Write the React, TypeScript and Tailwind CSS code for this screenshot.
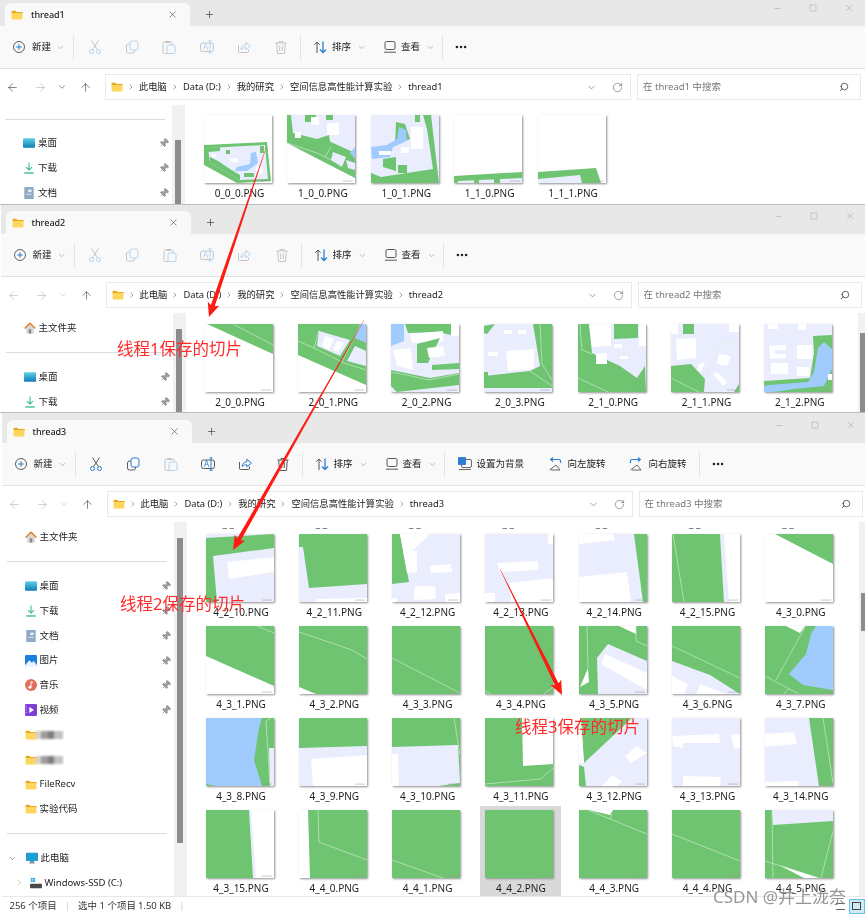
import { ArrowLeft, ArrowRight, ArrowUp, ChevronDown, ChevronRight, Ellipsis, Minus, Pin, Plus, RotateCw, Search, Square, X } from "lucide-react";
import type { ReactNode } from "react";

const G = "#6fc472";
const L = "#e9edfd";
const W = "#9fcbfd";
const A = "#ffffff";

type Thumb = { n: string; bg: string; p?: [string, string][]; l?: string[] };

const thread1: Thumb[] = [
  {
    n: "0_0_0.PNG", bg: A,
    p: [
      [G, "0,30 63,27 67,66 33,68 0,50"],
      [L, "4,33 61,30 64,64 36,65 6,48"],
      [W, "47,38 52,37 54,48 43,56 31,56 33,52 46,49"],
      [G, "4,33 16,32 16,36 4,37"],
      [G, "6,42 14,46 26,54 36,60 36,65 6,48"],
      [G, "56,31 60,31 60,38 56,38"],
      [G, "40,58 50,58 50,62 40,62"],
      [G, "22,35 26,35 26,39 22,39"],
      [A, "8,39 12,39 12,42 8,42"],
      [A, "52,52 58,51 59,58 53,59"],
      [A, "26,44 34,43 34,47 26,47"],
    ],
  },
  {
    n: "1_0_0.PNG", bg: A,
    p: [
      [L, "0,0 68,0 68,63 0,28"],
      [G, "0,0 4,0 6,18 30,24 44,27 68,38 68,63 0,28"],
      [G, "18,0 29,0 29,7 18,7"],
      [G, "39,0 46,0 46,5 39,5"],
      [G, "30,24 42,20 44,32 34,30"],
      [W, "63,38 68,32 68,44"],
      [L, "46,37 59,42 55,52 44,45"],
      [L, "59,45 68,48 68,55 61,53"],
      [A, "8,17 14,17 14,23 8,23"],
      [A, "40,8 52,8 52,20 40,20"],
      [A, "24,2 32,2 32,10 24,10"],
    ],
    l: ["0,28 30,38 46,46", "44,32 38,42"],
  },
  {
    n: "1_0_1.PNG", bg: L,
    p: [
      [G, "52,0 60,0 68,68 0,68 0,58 10,62 62,54 56,14"],
      [G, "25,7 34,9 39,24 24,30"],
      [W, "28,12 35,15 36,26 22,32 19,42 1,44 0,32 16,30 26,24"],
      [G, "12,44 25,42 25,56 12,52"],
      [G, "27,50 36,50 36,58 27,58"],
      [G, "44,0 49,0 49,7 44,7"],
      [A, "40,12 52,12 52,34 40,34"],
      [A, "8,36 20,36 20,40 8,40"],
      [A, "30,32 38,32 38,38 30,38"],
    ],
  },
  {
    n: "1_1_0.PNG", bg: A,
    p: [
      [G, "0,61 68,57 68,64 0,68"],
      [L, "4,66 68,63 68,68 4,68"],
      [G, "20,63 25,63 25,68 20,68"],
      [G, "40,62 46,62 46,68 40,68"],
    ],
  },
  {
    n: "1_1_1.PNG", bg: A,
    p: [
      [G, "0,57 58,53 63,68 0,68"],
      [L, "0,64 42,60 44,68 0,68"],
      [G, "45,61 51,61 51,68 45,68"],
    ],
  },
];

const thread2: Thumb[] = [
  { n: "2_0_0.PNG", bg: A, p: [[G, "2,0 68,0 68,30"]], l: ["28,0 68,21"] },
  {
    n: "2_0_1.PNG", bg: A,
    p: [
      [G, "0,0 68,0 68,61 0,31"],
      [L, "21,7 52,16 42,32 19,22"],
      [W, "62,0 68,0 68,19 57,14"],
      [L, "57,22 68,27 68,42 49,37"],
      [A, "27,12 36,15 31,26 24,22"],
      [A, "39,17 46,19 40,28 35,26"],
    ],
    l: ["0,17 16,24 46,39 68,46", "16,24 21,6", "44,38 62,2"],
  },
  {
    n: "2_0_2.PNG", bg: L,
    p: [
      [W, "0,0 13,0 13,17 0,22"],
      [G, "14,0 60,0 60,11 47,8 17,9"],
      [A, "60,0 68,0 68,12 60,12"],
      [A, "19,10 52,7 52,17 21,19"],
      [G, "26,20 49,14 37,39 26,39"],
      [G, "41,41 68,39 68,45 41,46"],
      [A, "2,26 20,24 22,46 6,42"],
      [A, "36,24 52,22 54,32 38,34"],
      [G, "0,46 39,54 68,49 68,61 6,68 0,62"],
    ],
    l: ["0,48 20,52 38,56 68,50"],
  },
  {
    n: "2_0_3.PNG", bg: L,
    p: [
      [G, "49,0 68,0 68,64 0,64 0,52 46,47 56,42"],
      [G, "0,2 11,0 3,10 0,9"],
      [G, "0,48 4,48 4,52 0,52"],
      [A, "22,27 50,25 50,45 24,47"],
      [A, "20,6 28,6 28,10 20,10"],
      [A, "34,6 42,6 42,10 34,10"],
      [A, "4,28 14,28 14,32 4,32"],
    ],
    l: ["56,0 58,40 68,56", "46,47 68,62"],
  },
  {
    n: "2_1_0.PNG", bg: L,
    p: [
      [G, "0,0 11,0 14,29 42,42 59,54 67,42 68,68 0,68"],
      [G, "36,0 60,0 60,14 36,15"],
      [A, "11,0 33,0 33,22 14,23"],
      [A, "18,30 29,29 29,40 18,40"],
      [A, "61,0 68,0 68,22 61,22"],
      [A, "42,32 50,32 50,35 42,35"],
      [A, "36,20 44,20 44,24 36,24"],
    ],
    l: ["2,0 4,26 14,30", "0,54 30,68"],
  },
  {
    n: "2_1_1.PNG", bg: L,
    p: [
      [G, "12,0 23,0 23,10 12,10"],
      [G, "0,42 20,40 34,55 33,68 0,68"],
      [G, "63,68 68,60 68,68"],
      [A, "5,15 25,14 25,34 6,36"],
      [A, "0,0 7,0 7,10 0,10"],
      [A, "48,30 60,32 56,42 46,40"],
      [A, "28,40 34,38 30,48 26,46"],
      [A, "42,50 46,48 56,58 52,62"],
      [A, "58,0 68,0 68,8 58,8"],
    ],
    l: ["34,55 50,20 68,16", "0,54 28,68"],
  },
  {
    n: "2_1_2.PNG", bg: L,
    p: [
      [G, "0,57 46,54 50,29 49,12 68,11 68,68 0,68"],
      [W, "54,24 60,18 68,25 68,45 60,62 30,65 10,68 0,68 0,62 5,61 44,58 50,48"],
      [A, "5,22 22,21 22,34 6,35"],
      [A, "33,21 48,21 48,35 33,35"],
      [A, "7,39 24,39 24,50 7,50"],
      [A, "33,43 46,43 46,52 33,52"],
      [L, "11,26 22,26 22,30 11,30"],
      [A, "34,0 42,0 42,6 34,6"],
      [A, "4,0 14,0 14,5 4,5"],
      [A, "64,50 68,50 68,56 64,56"],
    ],
  },
];

const thread3: Thumb[] = [
  { n: "4_2_10.PNG", bg: G, p: [[L, "0,0 68,0 0,4"], [L, "7,22 68,14 68,68 11,68"], [A, "21,28 68,23 68,38 23,45"]] },
  { n: "4_2_11.PNG", bg: L, p: [[G, "0,0 68,0 68,50 10,54 4,13 0,13"], [A, "17,65 68,64 68,68 17,68"]] },
  {
    n: "4_2_12.PNG", bg: L,
    p: [
      [G, "0,0 8,0 17,48 0,50"],
      [A, "8,0 38,0 20,17 25,17 25,38 15,39"],
      [A, "38,32 59,30 60,38 39,39"],
      [A, "23,52 43,52 44,65 22,66"],
      [A, "53,60 68,59 68,68 53,68"],
      [A, "0,64 5,64 5,68 0,68"],
    ],
  },
  {
    n: "4_2_13.PNG", bg: L,
    p: [
      [A, "12,29 53,27 53,36 15,38"],
      [A, "25,49 68,44 68,68 26,68"],
      [A, "0,59 10,59 10,68 0,68"],
      [A, "63,0 68,0 68,10 63,10"],
    ],
  },
  { n: "4_2_14.PNG", bg: L, p: [[G, "55,0 68,0 68,68 64,68"], [A, "0,0 34,0 36,6 0,10"], [A, "0,43 48,38 52,68 0,68"]] },
  { n: "4_2_15.PNG", bg: A, p: [[L, "48,0 52,0 57,68 52,68"], [G, "0,0 48,0 52,68 0,68"]], l: ["1,0 12,68"] },
  { n: "4_3_0.PNG", bg: A, p: [[G, "10,0 68,0 68,30"]] },
  { n: "4_3_1.PNG", bg: G, p: [[A, "0,30 68,60 68,68 0,68"]], l: ["51,0 68,7"] },
  { n: "4_3_2.PNG", bg: G, p: [[A, "0,61 17,68 0,68"]], l: ["0,6 53,24 68,33"] },
  { n: "4_3_3.PNG", bg: G, l: ["0,32 68,67"] },
  { n: "4_3_4.PNG", bg: G, l: ["0,65 6,68", "59,68 68,61"] },
  {
    n: "4_3_5.PNG", bg: G,
    p: [
      [L, "18,32 29,18 68,35 68,68 19,68"],
      [A, "26,28 68,47 68,64 22,38"],
      [A, "40,0 57,0 57,8"],
      [A, "1,61 9,42 10,56"],
    ],
    l: ["8,0 9,42", "57,0 57,15 68,20"],
  },
  {
    n: "4_3_6.PNG", bg: G,
    p: [[L, "0,35 38,49 68,68 0,68"], [A, "0,50 16,58 12,68 0,68"], [A, "28,58 54,68 25,68"]],
    l: ["0,20 68,52"],
  },
  {
    n: "4_3_7.PNG", bg: G,
    p: [[W, "51,0 68,0 68,64 38,59 24,48 41,28 46,8"], [A, "21,0 40,0 35,7"]],
    l: ["40,1 11,54", "0,50 34,68", "23,63 19,68"],
  },
  {
    n: "4_3_8.PNG", bg: W,
    p: [[G, "56,0 68,0 68,68 56,68 48,42 53,10"], [L, "63,30 68,30 68,68 64,68"], [G, "0,66 10,68 0,68"]],
    l: ["65,0 60,3 64,68"],
  },
  { n: "4_3_9.PNG", bg: G, p: [[L, "0,30 68,28 68,68 0,68"], [A, "12,41 68,37 68,68 14,68"]] },
  {
    n: "4_3_10.PNG", bg: G,
    p: [[L, "0,29 66,27 68,65 46,68 0,68"], [A, "0,36 6,36 7,68 0,68"]],
    l: ["62,0 68,37"],
  },
  { n: "4_3_11.PNG", bg: G, p: [[A, "37,0 68,0 68,46 38,48"]], l: ["0,66 44,62 56,61 68,50"] },
  {
    n: "4_3_12.PNG", bg: L,
    p: [
      [G, "2,0 53,0 5,45"],
      [A, "0,0 2,0 5,45 0,45"],
      [G, "0,47 5,49 7,68 0,68"],
      [A, "58,28 68,35 52,45 46,38"],
      [A, "33,57 43,63 38,68 23,68"],
    ],
  },
  {
    n: "4_3_13.PNG", bg: L,
    p: [
      [A, "0,18 47,16 48,25 11,25 11,30 1,28"],
      [A, "59,17 68,16 68,30 62,31"],
      [A, "11,58 49,59 48,68 11,68"],
    ],
  },
  {
    n: "4_3_14.PNG", bg: L,
    p: [
      [G, "44,0 68,0 68,68 54,68"],
      [A, "0,16 29,14 32,26 0,29"],
      [A, "0,64 33,63 34,68 0,68"],
    ],
    l: ["58,0 68,65"],
  },
  { n: "4_3_15.PNG", bg: A, p: [[L, "43,0 45,0 50,68 47,68"], [G, "0,0 43,0 47,68 0,68"]] },
  { n: "4_4_0.PNG", bg: G, p: [[A, "0,0 9,0 11,68 0,68"]], l: ["19,0 20,32 68,50"] },
  { n: "4_4_1.PNG", bg: G, l: ["0,50 51,68"] },
  { n: "4_4_2.PNG", bg: G },
  { n: "4_4_3.PNG", bg: G, p: [[A, "10,0 34,0 31,5"]], l: ["9,0 68,24", "31,9 33,4"] },
  { n: "4_4_4.PNG", bg: G, l: ["0,24 68,51"] },
  {
    n: "4_4_5.PNG", bg: G,
    p: [[L, "7,0 68,0 68,11 8,15"], [A, "14,55 54,68 39,68"]],
    l: ["0,51 54,68", "7,0 8,68", "68,21 56,68"],
  },
];

const Tile = ({ t, selected }: { t: Thumb; selected?: boolean }) => (
  <div className={`w-[81px] h-[91px] pt-1 ${selected ? "bg-[#d9d9d9]" : ""}`}>
    <svg viewBox="0 0 68 68" className="w-[68px] h-[68px] ml-[5px] shadow-[1px_1px_2px_#8f8f8f]">
      <rect width="68" height="68" fill={t.bg} />
      {t.p?.map(([c, pts], i) => <polygon key={i} points={pts} fill={c} />)}
      {t.l?.map((pts, i) => <polyline key={i} points={pts} fill="none" stroke="#dcefdc" strokeWidth="0.6" />)}
      <rect x="56" y="65.5" width="10" height="1.2" fill="#999" opacity="0.45" />
    </svg>
    <div className="mt-[3px] text-center text-[10px] leading-[14px] text-[#1c1c1c] whitespace-nowrap">{t.n}</div>
  </div>
);

const FolderIcon = ({ className = "w-3 h-[10px]" }: { className?: string }) => (
  <svg viewBox="0 0 14 12" className={`shrink-0 ${className}`}>
    <path d="M0.5 2a1 1 0 0 1 1-1h3.5l1.3 1.3h6.7a1 1 0 0 1 1 1v1h-13.5z" fill="#e8a820" />
    <rect x="0.5" y="3.5" width="13" height="8" rx="1" fill="#ffd65c" />
  </svg>
);

const Ic = ({ children }: { children: ReactNode }) => (
  <svg viewBox="0 0 14 14" fill="none" strokeWidth="1" className="w-[14px] h-[14px]">{children}</svg>
);

const cmdIcons = (on: boolean) => {
  const b = on ? "#2a7fd0" : "#b5d3ee";
  const g = on ? "#5a5a5a" : "#c4c4c4";
  return [
    <Ic key="cut">
      <circle cx="3.5" cy="11.5" r="2" stroke={b} />
      <circle cx="10.5" cy="11.5" r="2" stroke={b} />
      <path d="M4.5 9.8 10.5 .5M9.5 9.8 3.5 .5" stroke={g} />
    </Ic>,
    <Ic key="copy">
      <rect x="1.5" y="4" width="8" height="9" rx="2" stroke={g} />
      <rect x="5" y="1" width="8" height="9" rx="2" stroke={b} fill="#f9f9f9" />
    </Ic>,
    <Ic key="paste">
      <rect x="1" y="2" width="9" height="11.5" rx="1.5" stroke="#c4c4c4" />
      <rect x="3.5" y="1" width="4" height="2" fill="#c4c4c4" />
      <rect x="5" y="5" width="8" height="8.5" rx="1.5" stroke="#b5d3ee" fill="#f9f9f9" />
    </Ic>,
    <Ic key="rename">
      <rect x=".5" y="3" width="13" height="8.5" rx="2" stroke={g} />
      <text x="3" y="10" fontSize="8" fill={b}>A</text>
      <path d="M10 1v12M8.5 .8h3M8.5 13.2h3" stroke={b} />
    </Ic>,
    <Ic key="share">
      <path d="M1.5 5v6.5a1 1 0 0 0 1 1h8a1 1 0 0 0 1-1V9.5" stroke={g} />
      <path d="M4 9.5C4.5 6 7 4.8 8.8 4.8V2.2L13.5 6l-4.7 3.8V7.6C7 7.6 5.5 8.2 4 9.5Z" stroke={b} fill={on ? "#f9f9f9" : "none"} />
    </Ic>,
    <Ic key="trash">
      <path d="M1.5 3h11M5 3V1.5h4V3M2.7 3l.8 10.5h7l.8-10.5M5.7 5.5v5.5M8.3 5.5v5.5" stroke={g} />
    </Ic>,
  ];
};

const SortIcon = () => (
  <Ic>
    <path d="M4 13V2M1.3 4.7 4 2l2.7 2.7" stroke="#555" />
    <path d="M10 1.5v11M7 9.5l3 3 3-3" stroke="#2a7fd0" strokeWidth="1.3" />
  </Ic>
);

const ViewIcon = () => (
  <Ic>
    <rect x="2" y="1.5" width="10" height="8" rx="1.5" stroke="#555" />
    <path d="M1 12.2h12" stroke="#555" />
  </Ic>
);

const BgIcon = () => (
  <Ic>
    <rect x="3.5" y="2.5" width="10" height="8" rx="1.5" stroke="#666" />
    <path d="M1 12.5h12" stroke="#666" />
    <rect x="0" y="0" width="8" height="8" rx="1" fill="#2a7fd0" />
  </Ic>
);

const RotateIcon = ({ flip }: { flip?: boolean }) => (
  <Ic>
    <path d="M3 13h9L8 8 1.5 13" stroke="#666" />
    <path
      d={flip ? "M1.5 6V4a1.5 1.5 0 0 1 1.5-1.5h8M9 .5l2.3 2L9 4.5" : "M12.5 6V4A1.5 1.5 0 0 0 11 2.5H3M5 .5 2.7 2.5 5 4.5"}
      stroke="#2a7fd0"
      strokeWidth="1.2"
    />
  </Ic>
);

const Sep = () => <div className="w-px h-[25px] bg-[#e4e4e4] shrink-0" />;

const Chev = () => <ChevronDown size={9} strokeWidth={1.5} className="text-[#8a8a8a] shrink-0" />;

const Toolbar = ({ on, extra }: { on?: boolean; extra?: boolean }) => (
  <div className="h-[43px] shrink-0 flex items-center bg-[#f9f9f9] border-b border-[#e1e1e1] pl-[13px] text-[9.5px] text-[#222]">
    <div className="w-[60px] flex items-center">
      <svg viewBox="0 0 14 14" fill="none" className="w-3 h-3 shrink-0">
        <circle cx="7" cy="7" r="6.4" stroke="#444" />
        <path d="M7 3.8v6.4M3.8 7h6.4" stroke="#2a7fd0" strokeWidth="1.2" />
      </svg>
      <span className="ml-[7px] mr-[5px]">新建</span>
      <Chev />
    </div>
    <Sep />
    <div className="w-[226px] flex pl-[2px]">
      {cmdIcons(!!on).map((ic, i) => (
        <div key={i} className="w-[37.3px] flex justify-center">{ic}</div>
      ))}
    </div>
    <Sep />
    <div className="w-[69px] flex items-center pl-[12px]">
      <SortIcon />
      <span className="ml-[5px] mr-[6px]">排序</span>
      <Chev />
    </div>
    <div className="w-[72px] flex items-center pl-[13px]">
      <ViewIcon />
      <span className="ml-[4px] mr-[6px]">查看</span>
      <Chev />
    </div>
    <Sep />
    {extra && (
      <>
        <div className="w-[86px] flex items-center pl-[13px]">
          <BgIcon />
          <span className="ml-[5px] whitespace-nowrap">设置为背景</span>
        </div>
        <div className="w-[81px] flex items-center pl-[17px]">
          <RotateIcon />
          <span className="ml-[6px] whitespace-nowrap">向左旋转</span>
        </div>
        <div className="w-[87px] flex items-center pl-[17px]">
          <RotateIcon flip />
          <span className="ml-[6px] whitespace-nowrap">向右旋转</span>
        </div>
        <Sep />
      </>
    )}
    <Ellipsis size={14} strokeWidth={2.4} className="ml-[11px] text-[#222]" />
  </div>
);

const Crumb = ({ children }: { children: ReactNode }) => (
  <>
    <ChevronRight size={8} strokeWidth={1.6} className="mx-[4px] text-[#555] shrink-0" />
    <span className="whitespace-nowrap">{children}</span>
  </>
);

const AddressBar = ({ name, dimBack }: { name: string; dimBack?: boolean }) => (
  <div className="h-[36px] shrink-0 flex items-center bg-white text-[9.3px] text-[#222]">
    <div className="w-[105px] flex items-center text-[#333]">
      <ArrowLeft size={13} strokeWidth={1.1} className={`ml-[6px] ${dimBack ? "text-[#b0b0b0]" : ""}`} />
      <ArrowRight size={13} strokeWidth={1.1} className="ml-[15px] text-[#b0b0b0]" />
      <ChevronDown size={10} strokeWidth={1.3} className={`ml-[10px] ${dimBack ? "text-[#b0b0b0]" : ""}`} />
      <ArrowUp size={13} strokeWidth={1.1} className="ml-[12px]" />
    </div>
    <div className="w-[526px] h-[26px] flex items-center bg-white border border-[#e9e9e9] pl-[5px] pr-[7px]">
      <FolderIcon />
      <Crumb>此电脑</Crumb>
      <Crumb>Data (D:)</Crumb>
      <Crumb>我的研究</Crumb>
      <Crumb>空间信息高性能计算实验</Crumb>
      <Crumb>{name}</Crumb>
      <ChevronDown size={11} strokeWidth={1.1} className="ml-auto mr-[15px] text-[#444]" />
      <RotateCw size={11} strokeWidth={1.1} className="text-[#444]" />
    </div>
    <div className="ml-[6px] w-[224px] h-[26px] flex items-center bg-white border border-[#e9e9e9] pl-[5px] pr-[11px] text-[#777] text-[9.5px]">
      <span>在 {name} 中搜索</span>
      <Search size={10} strokeWidth={1.8} className="ml-auto -scale-x-100 text-[#333]" />
    </div>
  </div>
);

const NavGlyph = ({ kind }: { kind: string }) => {
  const c = "w-3 h-3 shrink-0";
  switch (kind) {
    case "home":
      return (
        <svg viewBox="0 0 14 14" className={c}>
          <path d="M2.5 6v7.5h9V6L7 2z" fill="#d9d9d9" />
          <rect x="5.5" y="8.5" width="3" height="5" fill="#8a8a8a" />
          <path d="M.7 7.5 7 1.5l6.3 6" fill="none" stroke="#e07a24" strokeWidth="1.6" />
        </svg>
      );
    case "desk":
      return (
        <svg viewBox="0 0 14 14" className={c}>
          <defs>
            <linearGradient id="dsk" x1="0" y1="0" x2="0" y2="1">
              <stop offset="0" stopColor="#5fd0ea" />
              <stop offset="1" stopColor="#0f7db8" />
            </linearGradient>
          </defs>
          <rect x="0" y="1.5" width="14" height="11" rx="1" fill="url(#dsk)" />
        </svg>
      );
    case "down":
      return (
        <svg viewBox="0 0 14 14" fill="none" className={c} stroke="#2fb58f" strokeWidth="1.2">
          <path d="M7 .5v9M3.5 6 7 9.5 10.5 6" />
          <path d="M1.5 12.8h11" strokeWidth="1.5" />
        </svg>
      );
    case "doc":
      return (
        <svg viewBox="0 0 14 14" className={c}>
          <rect x="1.5" y="0" width="11" height="14" rx="1" fill="#8fa9c7" />
          <rect x="6" y="3" width="4" height="3" fill="#e8eef6" />
          <rect x="4" y="8" width="6" height="1" fill="#e8eef6" />
        </svg>
      );
    case "pic":
      return (
        <svg viewBox="0 0 14 14" className={c}>
          <rect width="14" height="14" rx="1.5" fill="#1b7fe0" />
          <path d="M0 12 5 6l3 3 2-2 4 5v2H0z" fill="#e8f3fd" />
        </svg>
      );
    case "music":
      return (
        <svg viewBox="0 0 14 14" className={c}>
          <circle cx="7" cy="7" r="7" fill="#e0705c" />
          <circle cx="5.7" cy="9.7" r="1.8" fill="#fff" />
          <path d="M7 9.7V3.2l2.5 1" fill="none" stroke="#fff" strokeWidth="1.1" />
        </svg>
      );
    case "video":
      return (
        <svg viewBox="0 0 14 14" className={c}>
          <rect width="14" height="14" rx="1.5" fill="#7d3fd6" />
          <path d="M5 3.5 10.5 7 5 10.5z" fill="#fff" />
          <path d="M1.5 2v10" stroke="#d9c5f5" strokeDasharray="1.2 1.2" />
        </svg>
      );
    case "pc":
      return (
        <svg viewBox="0 0 14 14" className={c}>
          <rect y="1" width="14" height="9.5" rx="1" fill="#1c9ed4" />
          <rect x="5" y="10.5" width="4" height="2" fill="#6b7b88" />
          <rect x="3.5" y="12.3" width="7" height="1" fill="#6b7b88" />
        </svg>
      );
    case "drive":
      return (
        <svg viewBox="0 0 14 14" className={c}>
          <rect y="8" width="14" height="5" rx="1" fill="#4a4a4a" />
          <rect x="1" y="1" width="2.2" height="2.2" fill="#2a9fe0" />
          <rect x="3.7" y="1" width="2.2" height="2.2" fill="#2a9fe0" />
          <rect x="1" y="3.7" width="2.2" height="2.2" fill="#2a9fe0" />
          <rect x="3.7" y="3.7" width="2.2" height="2.2" fill="#2a9fe0" />
        </svg>
      );
    default:
      return <FolderIcon />;
  }
};

const NavRow = ({ kind, label, pinned }: { kind: string; label: string; pinned?: boolean }) => (
  <div className="h-[24.8px] flex items-center pl-[23px] pr-[3px] text-[#222]">
    <NavGlyph kind={kind} />
    <span className="ml-[3px]">{label}</span>
    {pinned && <Pin size={10} className="ml-auto text-[#8f8f8f] rotate-45" fill="#a0a0a0" />}
  </div>
);

const NavSep = () => (
  <div className="h-6 flex items-center">
    <div className="w-[160px] ml-[5px] h-px bg-[#dcdcdc]" />
  </div>
);

const BlurredRow = ({ w }: { w: string }) => (
  <div className="h-[24.8px] flex items-center pl-[23px]">
    <FolderIcon />
    <div className={`-ml-[2px] h-[8px] ${w} blur-[1px] flex`}>
      <div className="w-[6px] bg-[#d9d2c0]" />
      <div className="w-[7px] bg-[#9d9d9d]" />
      <div className="w-[6px] bg-[#7d7d7d]" />
      <div className="w-[9px] bg-[#c2c2c2]" />
    </div>
  </div>
);

const Window = ({
  name, pad, height, offset, on, extra, dimBack, navPad, sidebar, thumbTop, thumbH, cols, rightThumb, children, status,
}: {
  name: string;
  pad: string;
  height: string;
  offset: string;
  on?: boolean;
  extra?: boolean;
  dimBack?: boolean;
  navPad: string;
  sidebar: ReactNode;
  thumbTop: string;
  thumbH: string;
  cols: string;
  rightThumb?: ReactNode;
  children: ReactNode;
  status?: ReactNode;
}) => (
  <div className={`${height} overflow-hidden flex flex-col bg-white border-t border-[#bcbcbc] first:border-t-0`}>
    <div className={`${offset} w-[865px] flex-1 min-h-0 flex flex-col`}>
      <div className={`shrink-0 flex ${pad} bg-[#e8e8e8] items-start`}>
        <div className="ml-[5px] w-[185px] h-[23px] rounded-t-md bg-[#f9f9f9] flex items-center pl-[6px] pr-[12px] text-[9px] font-medium text-[#222]">
          <FolderIcon />
          <span className="ml-2">{name}</span>
          <X size={11} strokeWidth={1.2} className="ml-auto text-[#333]" />
        </div>
        <Plus size={11} strokeWidth={1.4} className="ml-[14px] mt-[6px] text-[#333]" />
        <div className="ml-auto flex items-center text-[#8a8a8a] mr-[11px]">
          <Minus size={9} strokeWidth={1} />
          <Square size={8} strokeWidth={1} className="ml-[27px]" />
          <X size={10} strokeWidth={1} className="ml-[27px]" />
        </div>
      </div>
      <Toolbar on={on} extra={extra} />
      <AddressBar name={name} dimBack={dimBack} />
      <div className="flex-1 min-h-0 flex">
        <div className={`w-[172px] shrink-0 ${navPad} text-[9.5px] overflow-hidden`}>{sidebar}</div>
        <div className="w-[13px] shrink-0 bg-[#f1f1f1] pl-[3px]">
          <div className={`w-[6px] bg-[#8c8c8c] ${thumbTop} ${thumbH}`} />
        </div>
        <div className="flex-1 min-w-0 pl-[14px] overflow-hidden">
          <div className={cols}>{children}</div>
        </div>
        {rightThumb}
      </div>
      {status}
    </div>
  </div>
);

const Arrow = ({ x1, y1, x2, y2 }: { x1: number; y1: number; x2: number; y2: number }) => {
  const len = Math.hypot(x2 - x1, y2 - y1);
  const ux = (x2 - x1) / len;
  const uy = (y2 - y1) / len;
  const nx = -uy;
  const ny = ux;
  const pt = (d: number, s: number) => `${x1 + ux * d + nx * s},${y1 + uy * d + ny * s}`;
  const neck = len - 12;
  const pts = [pt(0, 0.2), pt(neck, 2), pt(neck - 2, 6), pt(len, 0), pt(neck - 2, -6), pt(neck, -2), pt(0, -0.2)];
  return <polygon points={pts.join(" ")} fill="#ff1a12" />;
};

const Note = ({ className, children }: { className: string; children: ReactNode }) => (
  <div className={`absolute text-[16.5px] leading-none text-[#ff2b2b] whitespace-nowrap ${className}`}>{children}</div>
);

export default function App() {
  return (
    <div className="relative w-[865px] h-[915px] overflow-hidden bg-white font-['Noto_Sans','Noto_Sans_CJK_SC',sans-serif] blur-[0.4px]">
      <Window
        name="thread1"
        pad="pt-[3px]"
        height="h-[204px]"
        offset="ml-0"
        navPad="pt-[2px]"
        sidebar={
          <>
            <NavSep />
            <NavRow kind="desk" label="桌面" pinned />
            <NavRow kind="down" label="下载" pinned />
            <NavRow kind="doc" label="文档" pinned />
          </>
        }
        thumbTop="mt-[35px]"
        thumbH="h-[70px]"
        cols="grid grid-cols-[repeat(5,83.4px)] pt-[6px]"
      >
        {thread1.map((t) => <Tile key={t.n} t={t} />)}
      </Window>

      <Window
        name="thread2"
        pad="pt-[6px]"
        height="h-[208px]"
        offset="ml-[0.5px]"
        dimBack
        navPad="pt-[3px]"
        sidebar={
          <>
            <NavRow kind="home" label="主文件夹" />
            <NavSep />
            <NavRow kind="desk" label="桌面" pinned />
            <NavRow kind="down" label="下载" pinned />
          </>
        }
        thumbTop="mt-[16px]"
        thumbH="h-[90px]"
        cols="grid grid-cols-[repeat(7,93.3px)] pt-[7px]"
        rightThumb={
          <div className="w-2 shrink-0 bg-[#f1f1f1] pl-[2px] pt-[20px]">
            <div className="w-[6px] h-[80px] bg-[#8c8c8c]" />
          </div>
        }
      >
        {thread2.map((t) => <Tile key={t.n} t={t} />)}
      </Window>

      <Window
        name="thread3"
        pad="pt-[7px]"
        height="h-[503px]"
        offset="ml-[1.5px]"
        on
        extra
        dimBack
        navPad="pt-[3px]"
        sidebar={
          <>
            <NavRow kind="home" label="主文件夹" />
            <NavSep />
            <NavRow kind="desk" label="桌面" pinned />
            <NavRow kind="down" label="下载" pinned />
            <NavRow kind="doc" label="文档" pinned />
            <NavRow kind="pic" label="图片" pinned />
            <NavRow kind="music" label="音乐" pinned />
            <NavRow kind="video" label="视频" pinned />
            <BlurredRow w="w-[28px]" />
            <BlurredRow w="w-[28px]" />
            <NavRow kind="folder" label="FileRecv" />
            <NavRow kind="folder" label="实验代码" />
            <NavSep />
            <div className="h-[24.8px] flex items-center pl-[6px]">
              <ChevronDown size={9} strokeWidth={1.4} className="text-[#444] mr-[9px]" />
              <NavGlyph kind="pc" />
              <span className="ml-[3px] text-[#222]">此电脑</span>
            </div>
            <div className="h-[24.8px] flex items-center pl-[13px]">
              <ChevronRight size={9} strokeWidth={1.2} className="text-[#888] mr-[6px]" />
              <NavGlyph kind="drive" />
              <span className="ml-[3px] text-[#222]">Windows-SSD (C:)</span>
            </div>
          </>
        }
        thumbTop="mt-[16px]"
        thumbH="h-[305px]"
        cols="grid grid-cols-[repeat(7,93.3px)] grid-rows-[8px] auto-rows-[92px]"
        rightThumb={
          <div className="w-2 shrink-0 bg-[#f1f1f1] pl-[2px] pt-[71px]">
            <div className="w-[6px] h-[38px] bg-[#8c8c8c]" />
          </div>
        }
        status={
          <div className="h-[19px] shrink-0 flex items-center bg-white border-t border-[#e8e8e8] pl-[8px] text-[9.5px] text-[#333]">
            <span>256 个项目</span>
            <span className="mx-[8px] text-[#ccc]">|</span>
            <span>选中 1 个项目</span>
            <span className="ml-[2px]">1.50 KB</span>
            <span className="mx-[8px] text-[#ccc]">|</span>
            <div className="ml-auto flex items-center mr-[2px]">
              <div className="w-[9px] h-[7px] border-y border-[#666] mr-[4px]" />
              <div className="w-[16px] h-[15px] bg-[#cfe9f7] border border-[#6cc0e8] flex items-center justify-center">
                <div className="w-[9px] h-[8px] border border-[#444]" />
              </div>
            </div>
          </div>
        }
      >
        {/* tail of the row scrolled off above */}
        {[0, 1, 2, 3, 4, 5, 6].map((i) => (
          <div key={i} className="h-[8px] overflow-hidden pl-[22px] text-[10px] leading-[2px] text-[#555] whitespace-pre">_ _</div>
        ))}
        {thread3.map((t, i) => (
          <Tile key={t.n} t={t} selected={i === 24} />
        ))}
      </Window>

      {/* annotations drawn over the three windows */}
      <svg viewBox="0 0 865 915" className="absolute inset-0 w-[865px] h-[915px] pointer-events-none">
        <Arrow x1={266} y1={148} x2={209} y2={317} />
        <Arrow x1={364} y1={320} x2={233} y2={550} />
        <Arrow x1={500} y1={569} x2={562} y2={695} />
      </svg>
      <Note className="left-[117px] top-[341px]">线程1保存的切片</Note>
      <Note className="left-[120px] top-[596px]">线程2保存的切片</Note>
      <Note className="left-[515px] top-[719px]">线程3保存的切片</Note>
      <div className="absolute left-[713px] top-[887px] text-[17px] leading-[20px] text-[#858585] opacity-85 whitespace-nowrap">CSDN @井上泷奈</div>
    </div>
  );
}
